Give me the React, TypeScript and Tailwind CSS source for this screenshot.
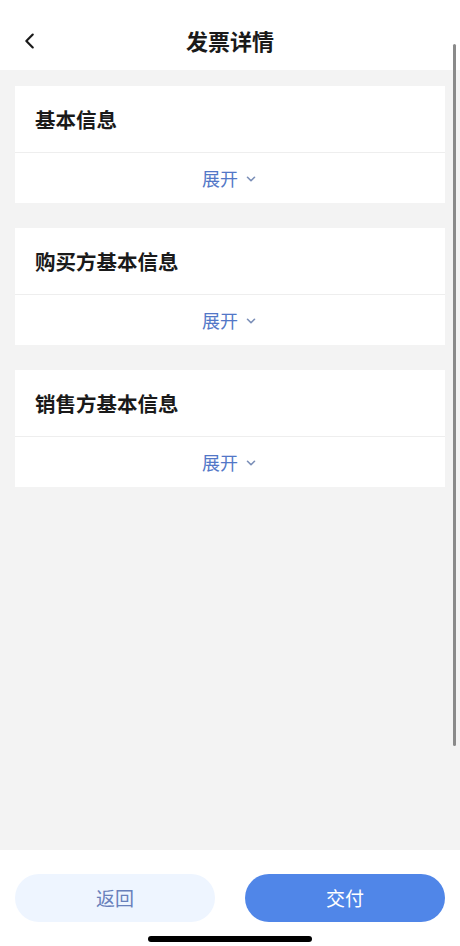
import React from "react";

const sections = ["基本信息", "购买方基本信息", "销售方基本信息"];

const Chevron = ({ className }: { className?: string }) => (
  <svg viewBox="0 0 12 12" className={className} fill="none">
    <path d="M3 4.5 6 7.5 9 4.5" stroke="currentColor" strokeWidth="1.4" strokeLinecap="round" strokeLinejoin="round" />
  </svg>
);

const Card = ({ title }: { title: string }) => (
  <div className="bg-white">
    <div className="h-[67px] flex items-center px-5 border-b border-[#eeeeee]">
      <span className="text-[20.5px] font-bold text-[#1a1a1a]">{title}</span>
    </div>
    <div className="h-[50px] flex items-center justify-center gap-1 text-[#5277c7]">
      <span className="text-[18px]">展开</span>
      <Chevron className="w-[14px] h-[14px] mt-[2px] ml-[2px] text-[#7b8fb8]" />
    </div>
  </div>
);

export default function App() {
  return (
    <div
      className="relative w-[460px] h-[946px] bg-[#f3f3f3] flex flex-col overflow-hidden"
      style={{ fontFamily: '"Noto Sans CJK SC", "Noto Sans", sans-serif' }}
    >
      {/* header */}
      <div className="h-[70px] bg-white flex items-center relative shrink-0">
        <svg viewBox="0 0 24 24" className="absolute left-[19px] top-[30px] w-[22px] h-[22px]" fill="none">
          <path d="M15 5 8 12l7 7" stroke="#1a1a1a" strokeWidth="2.4" strokeLinecap="round" strokeLinejoin="round" />
        </svg>
        <div className="w-full text-center text-[22px] font-bold text-[#1a1a1a] mt-[10px]">发票详情</div>
      </div>

      {/* content */}
      <div className="flex-1 flex flex-col gap-[25px] px-[15px] pt-[16px]">
        {sections.map((s) => (
          <Card key={s} title={s} />
        ))}
      </div>

      {/* bottom bar */}
      <div className="h-[96px] bg-white shrink-0 relative">
        <div className="flex gap-[30px] px-[15px] pt-[24px]">
          <button className="flex-1 h-[48px] rounded-full bg-[#eef5ff] text-[#6880bb] text-[19px]">返回</button>
          <button className="flex-1 h-[48px] rounded-full bg-[#5086e8] text-white text-[19px]">交付</button>
        </div>
        <div className="absolute left-[148px] top-[86px] w-[164px] h-[6px] rounded-full bg-black" />
      </div>

      {/* scroll indicator */}
      <div className="absolute left-[453px] top-[44px] w-[3px] h-[702px] rounded-full bg-[#8a8a8a]" />
    </div>
  );
}
